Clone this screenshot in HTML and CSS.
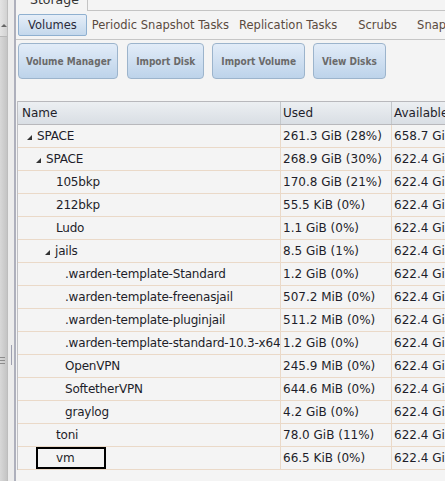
FILE: index.html
```html
<!DOCTYPE html>
<html>
<head>
<meta charset="utf-8">
<link rel="stylesheet" href="styles.css">
</head>
<body>
<div class="app">
  <div class="vscroll">
    <div class="arrow-up"></div>
    <div class="thumb"><div class="grip"><span></span><span></span><span></span></div></div>
  </div>
  <div class="splitter"><div class="sgrip"></div></div>
  <div class="main">
    <div class="toptabs">
      <div class="toptab"><span>Storage</span></div>
      <div class="toptab-rest"></div>
    </div>
    <div class="subtabs">
      <div class="subtab active">Volumes</div>
      <div class="subtab">Periodic Snapshot Tasks</div>
      <div class="subtab">Replication Tasks</div>
      <div class="subtab scrubs">Scrubs</div>
      <div class="subtab">Snapshots</div>
    </div>
    <div class="toolbar">
      <button class="btn first">Volume Manager</button>
      <button class="btn">Import Disk</button>
      <button class="btn">Import Volume</button>
      <button class="btn">View Disks</button>
    </div>
    <div class="grid">
      <div class="row head">
        <div class="c name">Name</div>
        <div class="c used">Used</div>
        <div class="c avail">Available</div>
      </div>
      <div class="row"><div class="c name l0"><i class="exp"></i>SPACE</div><div class="c used">261.3 GiB (28%)</div><div class="c avail">658.7 GiB</div></div>
      <div class="row"><div class="c name l1"><i class="exp"></i>SPACE</div><div class="c used">268.9 GiB (30%)</div><div class="c avail">622.4 GiB</div></div>
      <div class="row"><div class="c name l2">105bkp</div><div class="c used">170.8 GiB (21%)</div><div class="c avail">622.4 GiB</div></div>
      <div class="row"><div class="c name l2">212bkp</div><div class="c used">55.5 KiB (0%)</div><div class="c avail">622.4 GiB</div></div>
      <div class="row"><div class="c name l2">Ludo</div><div class="c used">1.1 GiB (0%)</div><div class="c avail">622.4 GiB</div></div>
      <div class="row"><div class="c name l2e"><i class="exp"></i>jails</div><div class="c used">8.5 GiB (1%)</div><div class="c avail">622.4 GiB</div></div>
      <div class="row"><div class="c name l3">.warden-template-Standard</div><div class="c used">1.2 GiB (0%)</div><div class="c avail">622.4 GiB</div></div>
      <div class="row"><div class="c name l3">.warden-template-freenasjail</div><div class="c used">507.2 MiB (0%)</div><div class="c avail">622.4 GiB</div></div>
      <div class="row"><div class="c name l3">.warden-template-pluginjail</div><div class="c used">511.2 MiB (0%)</div><div class="c avail">622.4 GiB</div></div>
      <div class="row"><div class="c name l3">.warden-template-standard-10.3-x64</div><div class="c used">1.2 GiB (0%)</div><div class="c avail">622.4 GiB</div></div>
      <div class="row"><div class="c name l3">OpenVPN</div><div class="c used">245.9 MiB (0%)</div><div class="c avail">622.4 GiB</div></div>
      <div class="row"><div class="c name l3">SoftetherVPN</div><div class="c used">644.6 MiB (0%)</div><div class="c avail">622.4 GiB</div></div>
      <div class="row"><div class="c name l3">graylog</div><div class="c used">4.2 GiB (0%)</div><div class="c avail">622.4 GiB</div></div>
      <div class="row"><div class="c name l2">toni</div><div class="c used">78.0 GiB (11%)</div><div class="c avail">622.4 GiB</div></div>
      <div class="row"><div class="c name l2"><span class="focus">vm</span></div><div class="c used">66.5 KiB (0%)</div><div class="c avail">622.4 GiB</div></div>
    </div>
  </div>
</div>
</body>
</html>
```
FILE: styles.css
```css
html, body {
  margin: 0;
  padding: 0;
  width: 445px;
  height: 481px;
  overflow: hidden;
  background: #f4f4f4;
  font-family: "DejaVu Sans", Verdana, sans-serif;
  font-size: 12px;
  color: #1e1e2a;
}
.app {
  display: flex;
  height: 481px;
}
.vscroll {
  width: 7px;
  flex: none;
  background: linear-gradient(to right, #e4e4e4, #d2d2d2);
  border-right: 1px solid #bdbdbd;
  display: flex;
  flex-direction: column;
}
.arrow-up {
  height: 36px;
  position: relative;
}
.arrow-up::after {
  content: "";
  position: absolute;
  left: 1px;
  top: 24px;
  border-left: 3px solid transparent;
  border-right: 3px solid transparent;
  border-bottom: 3px solid #666;
}
.thumb {
  flex: 1;
  background: linear-gradient(to right, #d8d8d8, #c4c4c4);
  border-top: 1px solid #b8b8b8;
  display: flex;
  align-items: flex-start;
  padding-top: 320px;
}
.grip {
  display: flex;
  flex-direction: column;
  gap: 2px;
  width: 5px;
}
.grip span {
  height: 1px;
  background: #8c8c8c;
}
.splitter {
  width: 6px;
  flex: none;
  background: #ececec;
  border-right: 2px solid #aeb0bc;
  display: flex;
  justify-content: center;
  align-items: flex-start;
  padding-top: 345px;
}
.sgrip {
  width: 1px;
  height: 20px;
  background: #9ea0b0;
}
.main {
  flex: 1;
  min-width: 0;
  overflow: hidden;
}
.toptabs {
  display: flex;
  height: 11px;
}
.toptab {
  width: 71px;
  flex: none;
  border-right: 1px solid #c4c4c4;
  overflow: hidden;
}
.toptab span {
  display: block;
  margin-top: -8px;
  padding-left: 14px;
  line-height: 16px;
  font-size: 12.5px;
  color: #333;
}
.toptab-rest {
  flex: 1;
  border-bottom: 1px solid #c4c4c4;
}
.subtabs {
  display: flex;
  align-items: center;
  height: 28px;
  border-bottom: 1px solid #c6c6c6;
  padding-left: 2px;
  white-space: nowrap;
}
.subtab {
  font-size: 11.5px;
  color: #5a4a40;
  padding: 0 5px;
  line-height: 20px;
}
.subtab.active {
  color: #2a2a3a;
  padding: 0 9px;
  border: 1px solid #8fb0d0;
  border-radius: 2px;
  background: linear-gradient(to bottom, #e6eef8, #c4d8ec);
}
.subtab.scrubs {
  margin-left: 11px;
  margin-right: 10px;
}
.toolbar {
  display: flex;
  gap: 8px;
  padding: 3px 0 0 2px;
  height: 61px;
  box-sizing: border-box;
}
.btn {
  height: 36px;
  padding: 0 8px;
  font-family: "DejaVu Sans Condensed", "DejaVu Sans", sans-serif;
  font-stretch: condensed;
  font-weight: bold;
  font-size: 10px;
  color: #6a6a6a;
  border: 1px solid #9cb4cc;
  border-radius: 4px;
  background: linear-gradient(to bottom, #e2ecf8, #bdd3ea);
}
.btn.first {
  padding: 0 6px 0 7px;
  margin-right: 1px;
}
.grid {
  width: 470px;
  border-left: 1px solid #c0c0c4;
  margin-left: 1px;
}
.row {
  display: flex;
  height: 23px;
  border-bottom: 1px solid #ead9c8;
  box-sizing: border-box;
  align-items: center;
  white-space: nowrap;
}
.row.head {
  height: 24px;
  border-top: 1px solid #b8b8bc;
  border-bottom: 1px solid #b8b8bc;
  background: linear-gradient(to bottom, #eceff2, #d9dee4);
}
.c {
  height: 100%;
  display: flex;
  align-items: center;
  box-sizing: border-box;
  overflow: hidden;
}
.c.name {
  width: 262px;
  padding-left: 4px;
  letter-spacing: -0.2px;
}
.head .c.name {
  letter-spacing: 0;
}
.c.used {
  width: 111px;
  padding-left: 2px;
  border-left: 1px solid #ead9c8;
}
.c.avail {
  flex: 1;
  padding-left: 2px;
  border-left: 1px solid #ead9c8;
}
.head .c.used, .head .c.avail {
  border-left-color: #c4c8cc;
}
.c.l0 { padding-left: 9px; }
.c.l1 { padding-left: 18px; }
.c.l2 { padding-left: 38px; }
.c.l2e { padding-left: 27px; }
.c.l3 { padding-left: 47px; }
.exp {
  width: 0;
  height: 0;
  border-left: 5px solid transparent;
  border-bottom: 5px solid #333;
  margin-right: 5px;
  margin-top: 2px;
}
.focus {
  margin-left: -20px;
  padding: 0 0 0 18px;
  width: 48px;
  height: 18px;
  line-height: 18px;
  border: 2px solid #000;
}
```
